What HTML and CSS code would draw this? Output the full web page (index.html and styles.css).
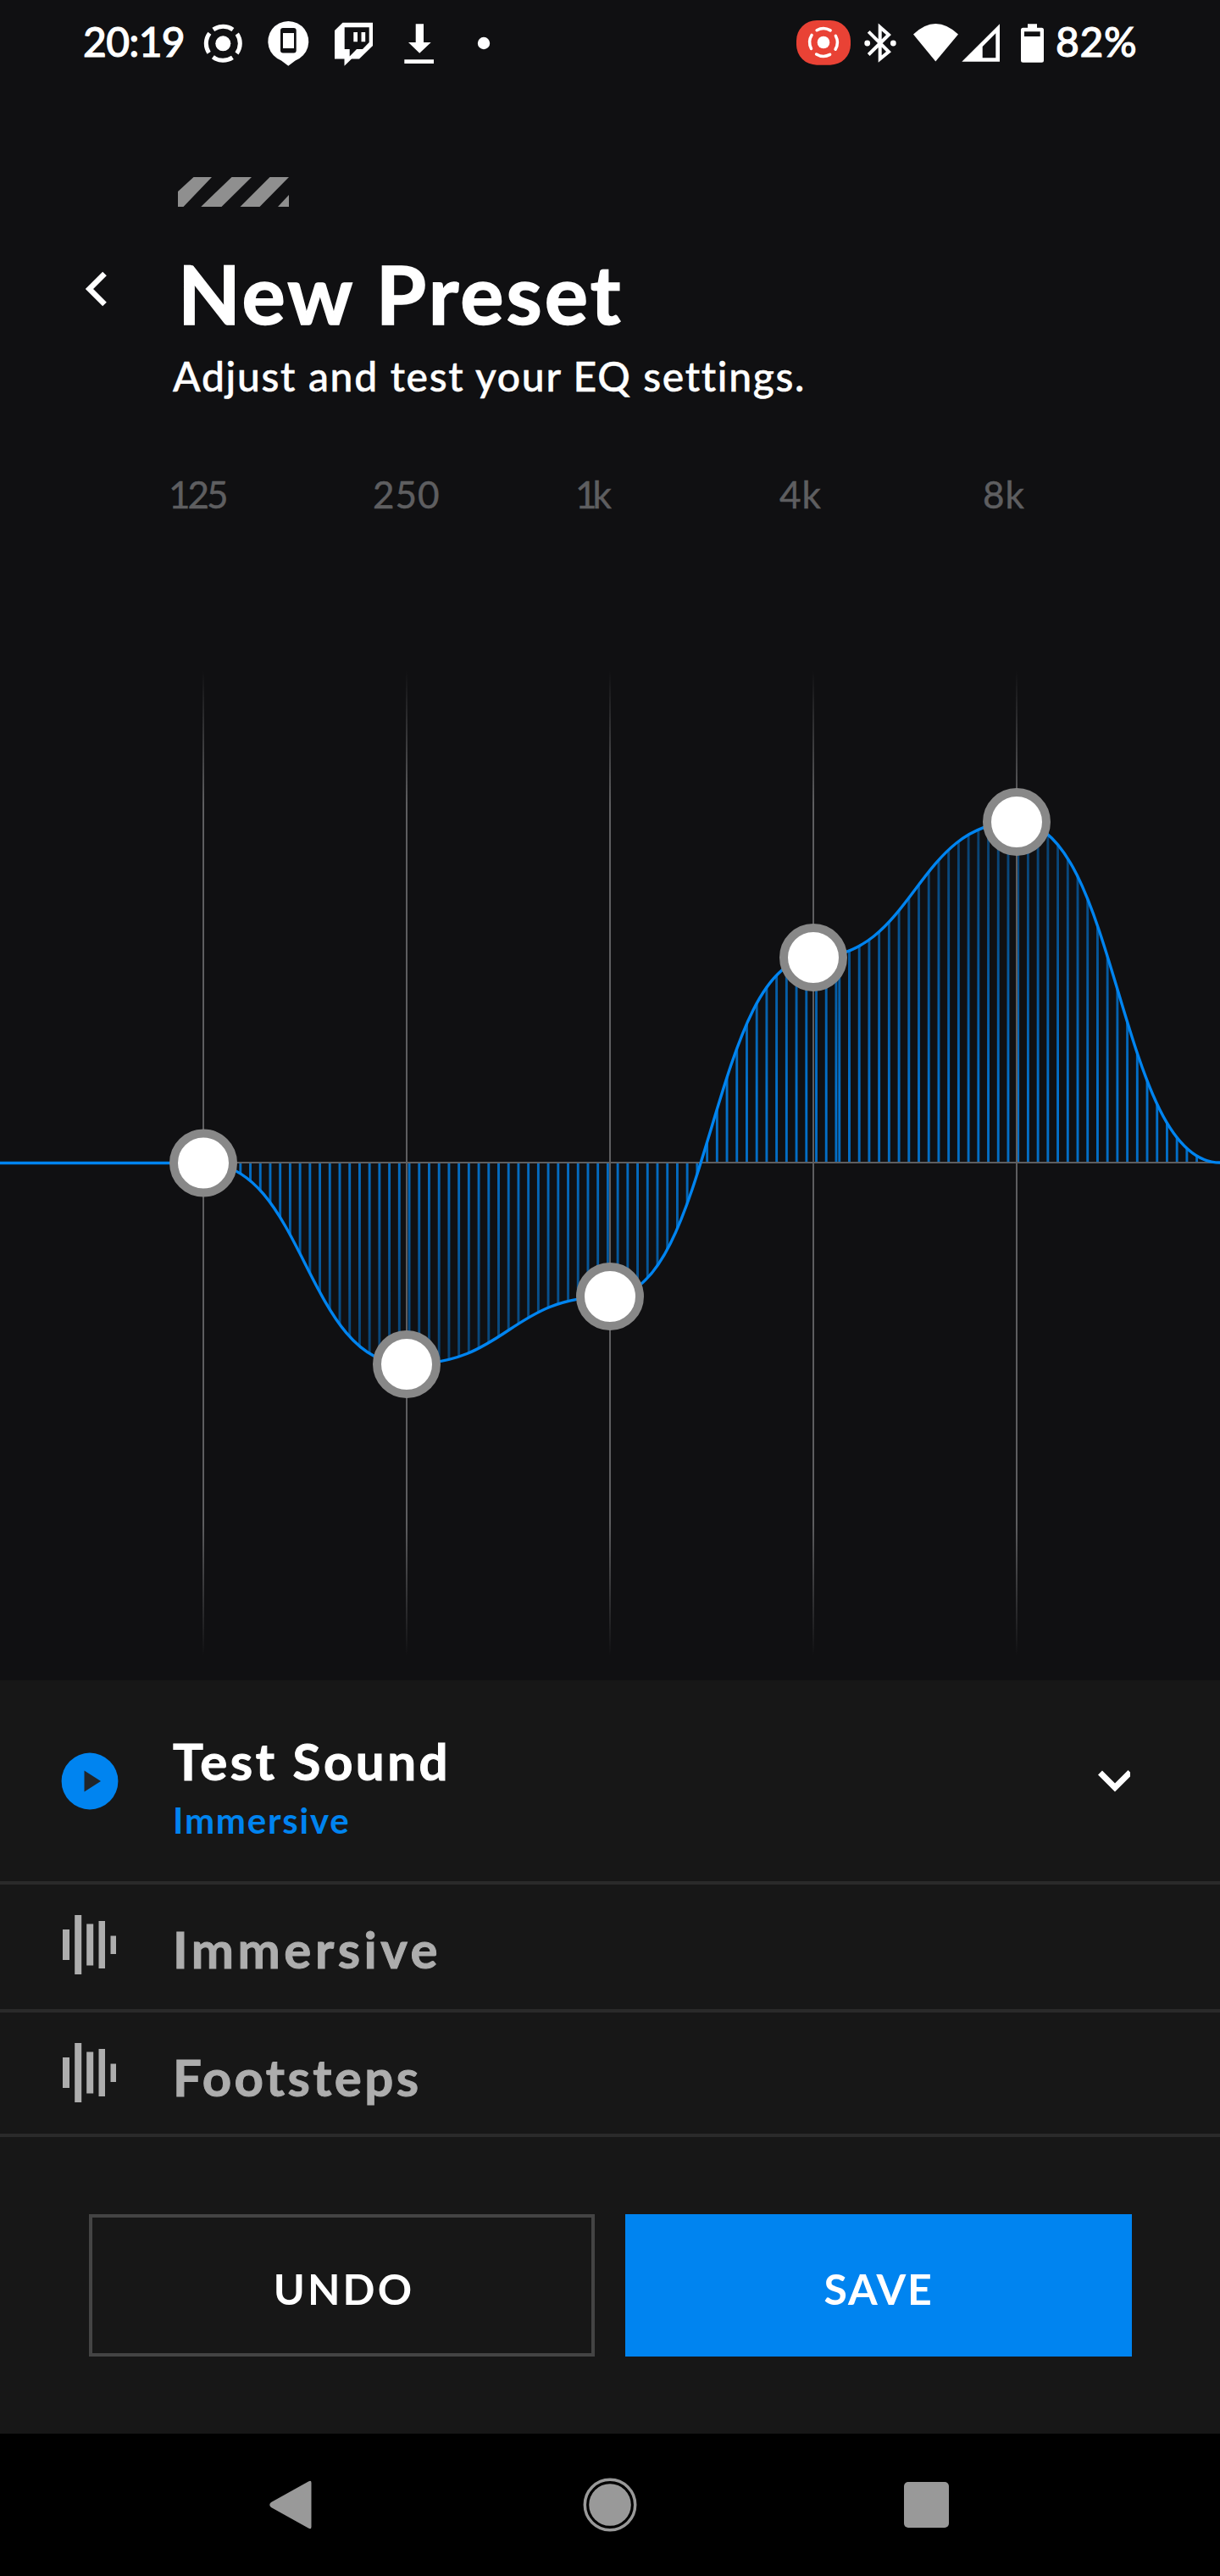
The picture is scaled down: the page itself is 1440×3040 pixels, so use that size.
FILE: index.html
```
<!DOCTYPE html>
<html lang="en">
<head>
    <meta charset="UTF-8">
    <meta name="viewport" content="width=device-width, initial-scale=1.0">
    <title>New Preset</title>
    <link rel="stylesheet" href="styles.css">
</head>
<body>
    <!-- Status bar -->
    <div class="status-bar">
        <div class="status-left">
            <span class="clock">20:19</span>
            <svg class="status-icons" width="350" height="104" viewBox="236 0 350 104">
                <!-- screen cast -->
                <circle cx="263.3" cy="51.3" r="9" fill="#fff"/>
                <circle class="ring" cx="263.3" cy="51.3" r="20" stroke-width="5" stroke-dasharray="24.4 7.016" transform="rotate(-125 263.3 51.3)"/>
                <!-- find device -->
                <path fill="#fff" d="M340.3 77.7L332 71.4A24 24 0 1 1 348.6 71.4Z"/>
                <rect x="331" y="33" width="18.7" height="29.5" rx="3" fill="#101012"/>
                <rect x="334" y="39" width="13" height="18" fill="#fff"/>
                <!-- twitch -->
                <path fill="#fff" fill-rule="evenodd" d="M404.5 26.7H440V54L424 69.5H415L406.5 77.7V69.5H395V36ZM406.7 32.3V58H412.7V66.5L421 58H428L435.7 50V32.3Z"/>
                <path fill="#fff" d="M417.3 38h4.7v11.3h-4.7zM426.5 38h4.7v11.3h-4.7z"/>
                <!-- download -->
                <path fill="#fff" d="M490.7 28.3H500V50H508.7L495.2 62.7L482 50H490.7ZM477.3 70.3H512V75H477.3Z"/>
                <circle cx="571" cy="51" r="7.2" fill="#fff"/>
            </svg>
        </div>
        <div class="status-right">
            <svg class="status-icons" width="296" height="104" viewBox="938 0 296 104">
                <!-- recording pill -->
                <rect x="940" y="24" width="64" height="52.7" rx="24" fill="#e94235"/>
                <circle cx="972" cy="50" r="7.3" fill="#fff"/>
                <circle class="ring" cx="972" cy="50" r="16.3" stroke-width="3.5" stroke-linecap="round" stroke-dasharray="16.6 9.004" transform="rotate(-119 972 50)"/>
                <!-- bluetooth -->
                <path fill="none" stroke="#fff" stroke-width="4" d="M1025.2 37.3L1049 61L1038.7 69.5V32L1049 41L1025.2 64.5"/>
                <circle cx="1023.7" cy="51" r="3.4" fill="#fff"/>
                <circle cx="1054.3" cy="51" r="3.4" fill="#fff"/>
                <!-- wifi -->
                <path fill="#fff" d="M1104.3 72.5L1078 40.5Q1104.3 15.5 1131 40.5Z"/>
                <!-- signal -->
                <path fill="#fff" fill-rule="evenodd" d="M1135.3 72.7L1180 28.3V72.7ZM1159.7 68.3H1175.3V39.3L1159.7 55Z"/>
                <!-- battery -->
                <path fill="#fff" fill-rule="evenodd" d="M1213 28.3H1224V32.7H1229.5Q1232 32.7 1232 35.2V71.2Q1232 73.7 1229.5 73.7H1207.5Q1205 73.7 1205 71.2V35.2Q1205 32.7 1207.5 32.7H1213ZM1209 37.3V43H1227.7V37.3Z"/>
            </svg>
            <span class="battery">82%</span>
        </div>
    </div>

    <!-- Header -->
    <div class="header">
        <svg class="stripes" width="131" height="35" viewBox="209.5 209 131 35">
            <path fill="#8f8f8f" d="M228 209H249.5L216 244H209.5V226ZM273 209H296.5L261 244H236.7ZM318 209H340.5L306 244H283ZM327.5 244L340.5 230V244Z"/>
        </svg>
        <div class="title-row">
            <svg class="back" width="27" height="44" viewBox="0 0 27 44">
                <path fill="none" stroke="#fff" stroke-width="6.6" d="M23.5 4L5.5 22L23.5 40"/>
            </svg>
            <h1>New Preset</h1>
        </div>
        <p class="subtitle">Adjust and test your EQ settings.</p>
    </div>

    <!-- Equalizer -->
    <div class="bands">
        <span class="tight">125</span>
        <span>250</span>
        <span class="tighter">1k</span>
        <span>4k</span>
        <span>8k</span>
    </div>
    <svg class="chart" width="1440" height="1373" viewBox="0 610 1440 1373">
        <defs>
            <linearGradient id="hatch" gradientUnits="userSpaceOnUse" x1="0" y1="970" x2="0" y2="1610">
                <stop offset="0" stop-color="#0084f0" stop-opacity="0.4"/>
                <stop offset="0.5" stop-color="#0084f0" stop-opacity="0.84"/>
                <stop offset="0.63" stop-color="#0084f0" stop-opacity="0.8"/>
                <stop offset="1" stop-color="#0084f0" stop-opacity="0.42"/>
            </linearGradient>
            <linearGradient id="guide" gradientUnits="userSpaceOnUse" x1="0" y1="792" x2="0" y2="1954">
                <stop offset="0" stop-color="#5e5e60" stop-opacity="0"/>
                <stop offset="0.135" stop-color="#5e5e60"/>
                <stop offset="0.865" stop-color="#5e5e60"/>
                <stop offset="1" stop-color="#5e5e60" stop-opacity="0"/>
            </linearGradient>
            <clipPath id="area">
                <path d="M240 1372C360 1372 360 1610 480 1610C600 1610 600 1530 720 1530C840 1530 840 1130 960 1130C1080 1130 1080 970 1200 970C1320 970 1320 1372 1440 1372Z"/>
            </clipPath>
        </defs>
        <!-- vertical hatching under the curve -->
        <g clip-path="url(#area)" fill="none" stroke="url(#hatch)" stroke-width="720">
            <path stroke-dasharray="2.9 8.819" d="M1.1 1290L988.6 1290.01"/>
            <path stroke-dasharray="2.9 8.819" d="M989.3 1290L1440 1290.01"/>
        </g>
        <rect x="0" y="1371" width="1440" height="2" fill="#5e5e60"/>
        <path fill="url(#guide)" d="M239 792h2v1162h-2zM479 792h2v1162h-2zM719 792h2v1162h-2zM959 792h2v1162h-2zM1199 792h2v1162h-2z"/>
        <path fill="none" stroke="#0084f0" stroke-width="3.4" d="M0 1372.5H240C360 1372 360 1610 480 1610C600 1610 600 1530 720 1530C840 1530 840 1130 960 1130C1080 1130 1080 970 1200 970C1320 970 1320 1372 1440 1372"/>
        <g class="knobs">
            <circle cx="240" cy="1372.500" r="35"/>
            <circle cx="480" cy="1610" r="35"/>
            <circle cx="720" cy="1530" r="35"/>
            <circle cx="960" cy="1130" r="35"/>
            <circle cx="1200" cy="970" r="35"/>
        </g>
    </svg>

    <!-- Test sound panel -->
    <div class="panel">
        <div class="test-sound">
            <svg class="play" width="68" height="68" viewBox="0 0 68 68">
                <circle cx="34" cy="34" r="33.4" fill="#0084f0"/>
                <path fill="#212529" d="M27.5 21.5L47 34L27.5 46.5Z"/>
            </svg>
            <div class="test-text">
                <h2>Test Sound</h2>
                <p>Immersive</p>
            </div>
            <svg class="chevron" width="38" height="26" viewBox="0 0 38 26">
                <path fill="none" stroke="#fff" stroke-width="7" d="M2.5 3L20 20.5L38 2.5"/>
            </svg>
        </div>
        <div class="sound">
            <svg class="wave" width="64" height="70" viewBox="0 0 64 70">
                <path fill="#adadad" d="M0 17h8v36H0zM14.2 0h8v70h-8zM28.2 10.5h8v49h-8zM42.5 7h7.5v56h-7.5zM56.5 24.5h6.5v21.5h-6.5z"/>
            </svg>
            <span>Immersive</span>
        </div>
        <div class="sound last">
            <svg class="wave" width="64" height="70" viewBox="0 0 64 70">
                <path fill="#adadad" d="M0 17h8v36H0zM14.2 0h8v70h-8zM28.2 10.5h8v49h-8zM42.5 7h7.5v56h-7.5zM56.5 24.5h6.5v21.5h-6.5z"/>
            </svg>
            <span class="footsteps">Footsteps</span>
        </div>
        <div class="buttons">
            <button class="undo">UNDO</button>
            <button class="save">SAVE</button>
        </div>
    </div>

    <!-- Navigation bar -->
    <div class="nav-bar">
        <svg width="50" height="60" viewBox="0 0 50 60">
            <path fill="#999" d="M46 2.5Q49.5 0.5 49.5 4V56Q49.5 59.5 46 57.5L2 33Q-1.5 30 2 27Z"/>
        </svg>
        <svg class="home" width="64" height="64" viewBox="0 0 64 64">
            <circle cx="32" cy="32" r="29.7" fill="none" stroke="#999" stroke-width="3.5"/>
            <circle cx="32" cy="32" r="24.8" fill="#999"/>
        </svg>
        <svg width="53" height="54" viewBox="0 0 53 54">
            <rect width="53" height="54" rx="5" fill="#999"/>
        </svg>
    </div>
</body>
</html>
```
FILE: styles.css
```
* {
    box-sizing: border-box;
}
body {
    margin: 0;
    width: 1440px;
    height: 3040px;
    background-color: #101012;
    color: white;
    font-family: Lato, "Open Sans", sans-serif;
    display: flex;
    flex-direction: column;
}
svg {
    display: block;
    flex-shrink: 0;
}
h1, h2, p {
    margin: 0;
}

/* Status bar */
.status-bar {
    height: 104px;
    padding: 0 99px 0 98px;
    display: flex;
    justify-content: space-between;
}
.status-left, .status-right {
    display: flex;
    font-size: 48px;
    font-weight: 500;
    line-height: 98px;
    -webkit-text-stroke: 1px white;
}
.clock {
    width: 138px;
    letter-spacing: -0.7px;
}
.battery {
    width: 95px;
    margin-left: 12px;
    letter-spacing: 0.6px;
}
.ring {
    fill: none;
    stroke: white;
}

/* Header */
.header {
    padding-top: 105px;
}
.stripes {
    margin-left: 210px;
}
.title-row {
    display: flex;
    align-items: center;
    margin-top: 44px;
    padding-left: 100px;
}
.back {
    margin: -11px 83px 0 0;
}
h1 {
    font-size: 96px;
    line-height: 116px;
    letter-spacing: 3.1px;
    -webkit-text-stroke: 1.5px white;
}
.subtitle {
    margin: 11px 0 0 204px;
    font-size: 48px;
    font-weight: 500;
    line-height: 58px;
    letter-spacing: 1.7px;
    -webkit-text-stroke: 0.5px white;
}

/* Equalizer */
.bands {
    display: grid;
    grid-template-columns: repeat(5, 240px);
    margin-top: 83px;
    padding-left: 200px;
    color: #5e5e60;
    font-size: 44px;
    line-height: 54px;
    letter-spacing: 1px;
    -webkit-text-stroke: 0.5px #5e5e60;
}
.bands .tight {
    margin-left: -1px;
    letter-spacing: -3px;
}
.bands .tighter {
    margin-left: -1px;
    letter-spacing: -5px;
}
.knobs circle {
    fill: white;
    stroke: #888;
    stroke-width: 10px;
}

/* Test sound panel */
.panel {
    height: 889px;
    background-color: #171717;
}
.test-sound {
    height: 241px;
    padding: 0 106px 0 72px;
    border-bottom: 4px solid #2a2a2a;
    display: flex;
    align-items: center;
}
.test-text {
    flex: 1;
    margin: 11px 0 0 64px;
}
h2 {
    font-size: 60px;
    line-height: 72px;
    letter-spacing: 3.5px;
    -webkit-text-stroke: 1px white;
}
.test-text p {
    margin-top: 9px;
    color: #0084f0;
    font-size: 42px;
    font-weight: 700;
    line-height: 50px;
    letter-spacing: 1.75px;
}
.sound {
    height: 151px;
    padding: 36px 0 0 74px;
    border-bottom: 4px solid #2a2a2a;
    display: flex;
    align-items: flex-start;
    color: #adadad;
    font-size: 60px;
    font-weight: 700;
    line-height: 72px;
    letter-spacing: 4.5px;
    -webkit-text-stroke: 1px #adadad;
}
.sound.last {
    height: 147px;
}
.sound span {
    margin: 4px 0 0 66px;
}
.sound .footsteps {
    letter-spacing: 3.4px;
}
.buttons {
    display: flex;
    gap: 36px;
    padding: 91px 104px 0 105px;
}
button {
    width: 597px;
    height: 168px;
    border: none;
    border-radius: 0;
    padding: 7px 0 0 5px;
    color: white;
    font-family: inherit;
    font-size: 50px;
    font-weight: 700;
}
.undo {
    background-color: transparent;
    border: 4px solid #444;
    letter-spacing: 3.1px;
}
.save {
    width: 598px;
    background-color: #0084f0;
    letter-spacing: 1.7px;
    padding-left: 0;
}

/* Navigation bar */
.nav-bar {
    height: 168px;
    padding: 0 320px 0 318px;
    background-color: black;
    display: flex;
    align-items: center;
    justify-content: space-between;
}
.home {
    margin-left: 4px;
}
```
